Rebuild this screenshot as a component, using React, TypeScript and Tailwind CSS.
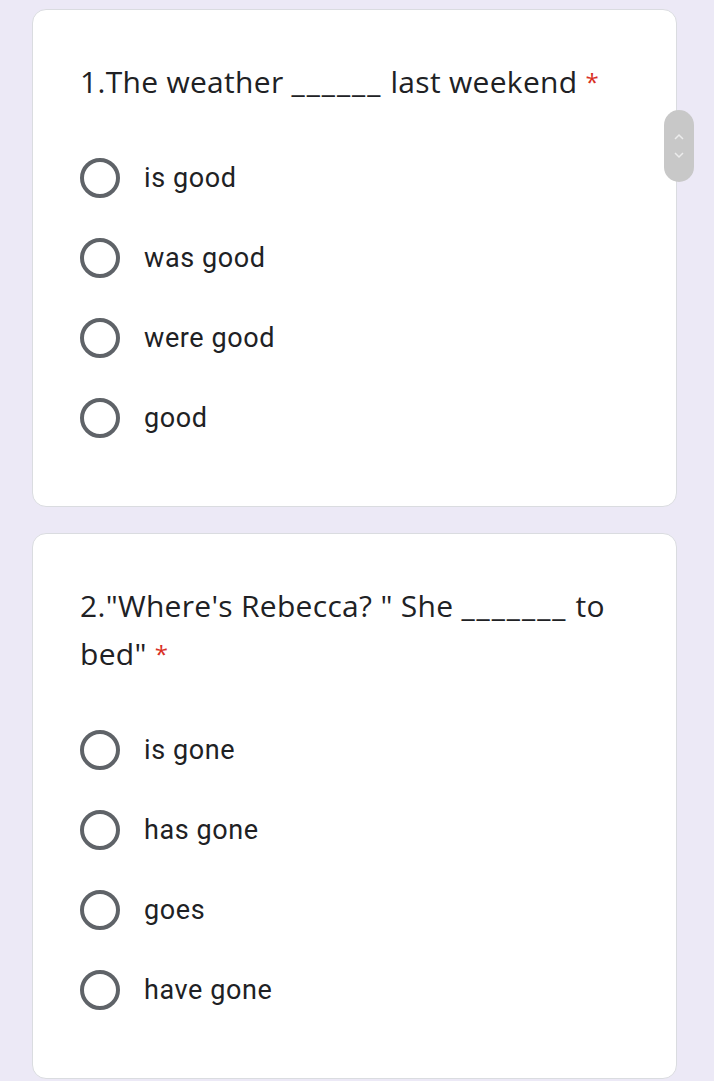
import React from "react";

const Radio = () => (
  <span className="w-[40px] h-[40px] rounded-full border-[4px] border-[#5f6368] shrink-0 box-border" />
);

const Option = ({ label }: { label: string }) => (
  <div className="flex items-center h-[80px]">
    <Radio />
    <span className="ml-[24px] text-[27px] tracking-[0.6px] text-[#202124]" style={{ fontFamily: "Roboto, sans-serif" }}>
      {label}
    </span>
  </div>
);

const Blank = ({ n }: { n: number }) => (
  <span className="tracking-[2px]">{"_".repeat(n)}</span>
);

const Card = ({ q, options }: { q: React.ReactNode; options: string[] }) => (
  <div className="bg-white rounded-[14px] border border-[#dadce0] pt-[48px] pb-[48px] pl-[47px] pr-[40px]">
    <div className="text-[30px] tracking-[0.3px] leading-[48px] text-[#202124]" style={{ fontFamily: "'Open Sans', sans-serif" }}>
      {q}
      <span className="text-[#d93025] text-[24px] ml-[8px] align-top">*</span>
    </div>
    <div className="mt-[32px] flex flex-col">
      {options.map((o) => (
        <Option key={o} label={o} />
      ))}
    </div>
  </div>
);

export default function App() {
  return (
    <div className="w-[714px] h-[1081px] bg-[#ece9f6] overflow-hidden relative">
      <div className="pl-[32px] pr-[37px] pt-[9px] flex flex-col gap-[26px]">
        <Card
          q={<>1.The weather <Blank n={6} /> last weekend</>}
          options={["is good", "was good", "were good", "good"]}
        />
        <Card
          q={<>2."Where's Rebecca? " She <Blank n={7} /> to bed"</>}
          options={["is gone", "has gone", "goes", "have gone"]}
        />
      </div>
      <div className="absolute left-[664px] top-[110px] w-[30px] h-[72px] rounded-full bg-[#c8c8c8] flex flex-col items-center justify-center gap-[10px]">
        <svg width="12" height="8" viewBox="0 0 12 8"><path d="M2 6 L6 2 L10 6" stroke="#ececec" strokeWidth="1.5" fill="none" /></svg>
        <svg width="12" height="8" viewBox="0 0 12 8"><path d="M2 2 L6 6 L10 2" stroke="#ececec" strokeWidth="1.5" fill="none" /></svg>
      </div>
    </div>
  );
}
